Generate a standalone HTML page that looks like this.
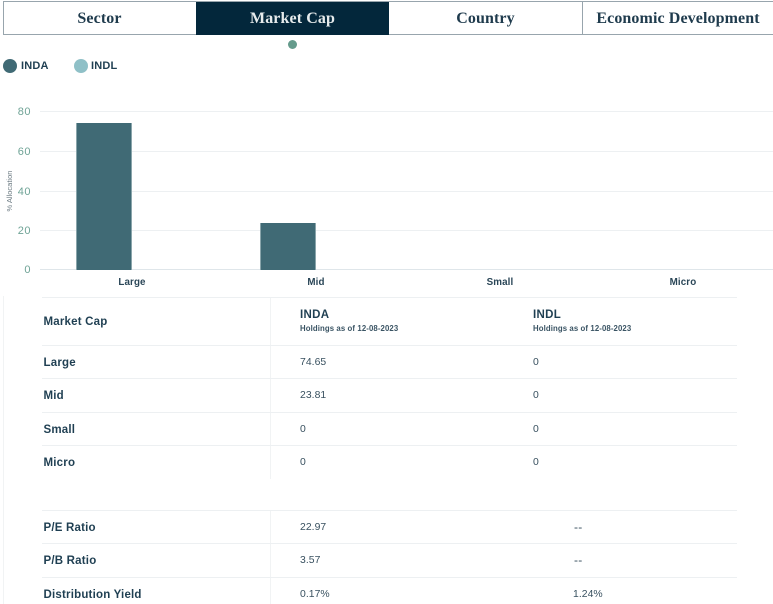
<!DOCTYPE html>
<html lang="en">
<head>
<meta charset="utf-8">
<style>
html,body{margin:0;padding:0;background:#fff}
body{width:773px;height:604px;position:relative;overflow:hidden;font-family:"Liberation Sans",sans-serif;color:#1a3a4c}
.a{position:absolute;white-space:nowrap}
.tab{position:absolute;top:2px;height:33px;line-height:33px;text-align:center;font-family:"Liberation Serif",serif;font-weight:700;font-size:16px;color:#1f3b4d;box-sizing:border-box;letter-spacing:.1px}
.h{position:absolute;background:#edf0f2;height:1px}
.v{position:absolute;background:#f1f3f4;width:1px}
.y{position:absolute;width:28px;text-align:right;left:3px;font-size:11px;color:#6fa396;letter-spacing:.5px;line-height:12px}
.x{position:absolute;font-size:9.8px;font-weight:700;color:#2a4657;line-height:12px;text-align:center;width:80px;letter-spacing:.1px}
.l{position:absolute;left:43.5px;font-size:11.5px;font-weight:700;color:#1f3f52;line-height:14px;letter-spacing:.2px;white-space:nowrap}
.c{position:absolute;font-size:10.4px;color:#38505f;line-height:14px;letter-spacing:.05px;white-space:nowrap}
.d{font-size:12px;letter-spacing:.3px}
.s{position:absolute;font-size:7.8px;font-weight:700;color:#3a5464;line-height:10px;letter-spacing:.1px;white-space:nowrap}
.t{position:absolute;font-size:11.5px;font-weight:700;color:#1f3f52;line-height:14px;letter-spacing:.3px}
.dot{position:absolute;border-radius:50%}
.bar{position:absolute;background:#406a75;border:solid #8aa5ab;border-width:0 1px;box-sizing:border-box}
</style>
</head>
<body>
<div class="a" style="left:3px;top:1px;width:770px;height:34px;border:1px solid #98a5ad;border-width:1px 0 1px 1px;box-sizing:border-box"></div>
<div class="tab" style="left:3px;width:193px">Sector</div>
<div class="a" style="left:196px;top:2px;width:193px;height:33px;background:#03273b"></div>
<div class="tab" style="left:196px;width:193px;color:#e6ebec">Market Cap</div>
<div class="tab" style="left:389px;width:193px">Country</div>
<div class="a" style="left:582px;top:2px;width:1px;height:32px;background:#98a5ad"></div>
<div class="tab" style="left:583px;width:190px">Economic Development</div>

<div class="dot" style="left:288px;top:40px;width:9px;height:9px;background:#659b8c"></div>

<div class="dot" style="left:3px;top:59px;width:14px;height:14px;background:#406a75"></div>
<div class="a" style="left:21px;top:59px;font-size:11px;font-weight:700;line-height:14px;color:#1f3f52;letter-spacing:.2px">INDA</div>
<div class="dot" style="left:74px;top:59px;width:14px;height:14px;background:#8fc0c7"></div>
<div class="a" style="left:91px;top:59px;font-size:11px;font-weight:700;line-height:14px;color:#1f3f52;letter-spacing:.2px">INDL</div>

<div class="h" style="left:40px;top:111px;width:733px"></div>
<div class="h" style="left:40px;top:151px;width:733px"></div>
<div class="h" style="left:40px;top:191px;width:733px"></div>
<div class="h" style="left:40px;top:230px;width:733px"></div>
<div class="h" style="left:40px;top:269px;width:733px;background:#dfe6ea"></div>
<div class="y" style="top:106px">80</div>
<div class="y" style="top:146px">60</div>
<div class="y" style="top:186px">40</div>
<div class="y" style="top:225px">20</div>
<div class="y" style="top:264px">0</div>
<div class="a" style="left:-12px;top:186px;width:44px;text-align:center;font-size:7.5px;line-height:10px;color:#6b7a82;transform:rotate(-90deg)">% Allocation</div>

<div class="bar" style="left:76px;top:123px;width:56px;height:147px"></div>
<div class="bar" style="left:260px;top:223px;width:56px;height:47px"></div>
<div class="x" style="left:92px;top:277px">Large</div>
<div class="x" style="left:276px;top:277px">Mid</div>
<div class="x" style="left:460px;top:277px">Small</div>
<div class="x" style="left:643px;top:277px">Micro</div>

<div class="v" style="left:3px;top:296px;height:308px"></div>
<div class="v" style="left:270px;top:297px;height:182px"></div>
<div class="v" style="left:270px;top:510px;height:94px"></div>

<div class="h" style="left:42px;top:297px;width:695px"></div>
<div class="h" style="left:42px;top:345px;width:695px"></div>
<div class="h" style="left:42px;top:378px;width:695px"></div>
<div class="h" style="left:42px;top:412px;width:695px"></div>
<div class="h" style="left:42px;top:445px;width:695px"></div>
<div class="h" style="left:42px;top:510px;width:695px"></div>
<div class="h" style="left:42px;top:543px;width:695px"></div>
<div class="h" style="left:42px;top:577px;width:695px"></div>

<div class="l" style="top:315px">Market Cap</div>
<div class="t" style="left:300px;top:308px">INDA</div>
<div class="s" style="left:300px;top:324px">Holdings as of 12-08-2023</div>
<div class="t" style="left:533px;top:308px">INDL</div>
<div class="s" style="left:533px;top:324px">Holdings as of 12-08-2023</div>

<div class="l" style="top:356px">Large</div><div class="c" style="left:300px;top:356px">74.65</div><div class="c" style="left:533px;top:356px">0</div>
<div class="l" style="top:389px">Mid</div><div class="c" style="left:300px;top:389px">23.81</div><div class="c" style="left:533px;top:389px">0</div>
<div class="l" style="top:423px">Small</div><div class="c" style="left:300px;top:423px">0</div><div class="c" style="left:533px;top:423px">0</div>
<div class="l" style="top:456px">Micro</div><div class="c" style="left:300px;top:456px">0</div><div class="c" style="left:533px;top:456px">0</div>

<div class="l" style="top:521px">P/E Ratio</div><div class="c" style="left:300px;top:521px">22.97</div><div class="c d" style="left:574px;top:520px">--</div>
<div class="l" style="top:554px">P/B Ratio</div><div class="c" style="left:300px;top:554px">3.57</div><div class="c d" style="left:574px;top:553px">--</div>
<div class="l" style="top:588px">Distribution Yield</div><div class="c" style="left:300px;top:588px">0.17%</div><div class="c" style="left:573px;top:588px">1.24%</div>
</body>
</html>
